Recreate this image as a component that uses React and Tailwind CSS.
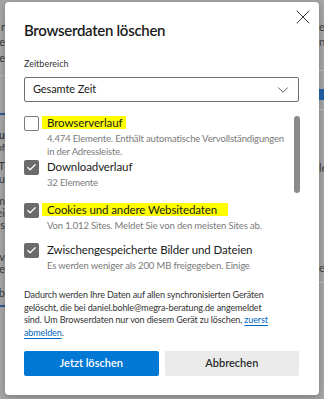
import { X, ChevronDown, Check } from "lucide-react";

const items = [
  {
    label: "Browserverlauf",
    desc: ["4.474 Elemente. Enthält automatische Vervollständigungen", "in der Adressleiste."],
    checked: false,
    mark: "-ml-[5px] bg-[#ffff00] pl-[5px] pr-[4px]",
    gap: "mt-[9px]",
  },
  {
    label: "Downloadverlauf",
    desc: ["32 Elemente"],
    checked: true,
    mark: "",
    gap: "mt-[1px]",
  },
  {
    label: "Cookies und andere Websitedaten",
    desc: ["Von 1.012 Sites. Meldet Sie von den meisten Sites ab."],
    checked: true,
    mark: "-ml-[5px] bg-[#ffff00] pl-[5px] pr-[11px]",
    gap: "mt-[13px]",
  },
  {
    label: "Zwischengespeicherte Bilder und Dateien",
    desc: ["Es werden weniger als 200 MB freigegeben. Einige"],
    checked: true,
    mark: "",
    gap: "mt-[10px]",
  },
];

function Checkbox({ checked }) {
  return checked ? (
    <span className="mt-[1px] flex h-[15px] w-[15px] shrink-0 items-center justify-center rounded-[2px] bg-[#6b6b6b]">
      <Check size={11} strokeWidth={2.6} className="text-white" />
    </span>
  ) : (
    <span className="mt-[1px] h-[15px] w-[15px] shrink-0 rounded-[2px] border border-[#7a7a7a] bg-white" />
  );
}

function Item({ item }) {
  return (
    <div className={`flex gap-[8px] ${item.gap}`}>
      <Checkbox checked={item.checked} />
      <div className="min-w-0 flex-1">
        <div className="whitespace-nowrap text-[11.5px] leading-[15px] tracking-[-0.1px] text-[#1b1b1b]">
          <span className={item.mark}>{item.label}</span>
        </div>
        <p className="mt-[2px] text-[9.5px] leading-[13px] tracking-[-0.15px] text-[#7a7a7a]">
          {item.desc.map((line) => (
            <span key={line} className="block whitespace-nowrap">
              {line}
            </span>
          ))}
        </p>
      </div>
    </div>
  );
}

function LeftStrip() {
  return (
    <div className="flex w-[5px] shrink-0 flex-col items-end overflow-hidden text-[11px] leading-[12px] text-[#3c3c3c]">
      <span className="mt-[21px]">r</span>
      <span className="mt-[3px]">e</span>
      <span className="mt-[4px]">e</span>
      <div className="mt-[11px] h-px w-full bg-[#b4b4b4]" />
      <div className="mt-[37px] h-[2px] w-full bg-[#2a5b92]" />
      <span className="mt-[14px] font-bold">u</span>
      <span className="mt-[1px] text-[9px]">of</span>
      <span className="mt-[6px]">T</span>
      <span className="mt-[1px]">u</span>
      <span className="mt-[10px]">m</span>
      <span className="mt-[0px]">ei</span>
      <span className="mt-[0px]">s</span>
      <span className="mt-[20px]">v</span>
      <span className="mt-[0px]">e</span>
      <span className="mt-[12px]">b</span>
      <div className="mt-[6px] h-[2px] w-full bg-[#2a5b92]" />
    </div>
  );
}

function RightStrip() {
  return (
    <div className="flex w-[5px] shrink-0 flex-col items-start overflow-hidden text-[11px] leading-[12px] text-[#3c3c3c]">
      <span className="mt-[21px]">e</span>
      <span className="mt-[3px]">n</span>
      <div className="mt-[22px] h-px w-full bg-[#b4b4b4]" />
      <div className="mt-[18px] h-[11px] w-full bg-[#1f5c9e]" />
      <div className="mt-[9px] h-px w-full bg-[#b4b4b4]" />
      <span className="mt-[52px]">le</span>
      <span className="mt-[88px]">e</span>
      <div className="mt-[8px] h-px w-full bg-[#b4b4b4]" />
    </div>
  );
}

export default function App() {
  return (
    <div
      className="flex h-[399px] w-[324px] overflow-hidden bg-[#a5a5a5]"
      style={{ fontFamily: '"Segoe UI", Lato, sans-serif' }}
    >
      <LeftStrip />
      <div className="mt-[2px] flex h-[393px] w-[314px] shrink-0 flex-col rounded-[4px] bg-white pl-[19px] pr-[19px] shadow-[0_2px_6px_rgba(0,0,0,0.25)]">
        <div className="flex items-start justify-between">
          <h1 className="mt-[18px] text-[15px] font-semibold leading-[20px] tracking-[-0.3px] text-[#1b1b1b]">
            Browserdaten löschen
          </h1>
          <button className="-mr-[15px] mt-[3px] text-[#333]">
            <X size={24} strokeWidth={1} />
          </button>
        </div>

        <label className="mt-[17px] text-[9px] leading-[13px] text-[#333]">Zeitbereich</label>
        <div className="mt-[7px] flex h-[25px] w-[275px] items-center justify-between rounded-[2px] border border-[#6e6e6e] pl-[8px] pr-[6px]">
          <span className="text-[11px] tracking-[-0.1px] text-[#1b1b1b]">Gesamte Zeit</span>
          <ChevronDown size={18} strokeWidth={1.2} className="text-[#444]" />
        </div>

        <div className="mt-[4px] flex h-[172px] overflow-hidden">
          <div className="min-w-0 flex-1">
            {items.map((item) => (
              <Item key={item.label} item={item} />
            ))}
          </div>
          <div className="ml-[2px] w-[6px] shrink-0">
            <div className="mt-[10px] h-[77px] w-[6px] rounded-full bg-[#8a8a8a]" />
          </div>
        </div>

        <p className="mt-[11px] whitespace-nowrap text-[9px] leading-[12.5px] tracking-[-0.12px] text-[#333]">
          Dadurch werden Ihre Daten auf allen synchronisierten Geräten
          <br />
          gelöscht, die bei daniel.bohle@megra-beratung.de angemeldet
          <br />
          sind. Um Browserdaten nur von diesem Gerät zu löschen,{" "}
          <a className="text-[#0067c0] underline underline-offset-2">zuerst</a>
          <br />
          <a className="text-[#0067c0] underline underline-offset-2">abmelden</a>.
        </p>

        <div className="mt-[12px] flex gap-[6px] pr-px">
          <button className="h-[25px] flex-1 rounded-[2px] bg-[#0078d4] text-[11px] font-semibold text-white">
            Jetzt löschen
          </button>
          <button className="h-[25px] flex-1 rounded-[2px] bg-[#ebebeb] text-[11px] font-semibold text-[#2b2b2b]">
            Abbrechen
          </button>
        </div>
      </div>
      <RightStrip />
    </div>
  );
}
